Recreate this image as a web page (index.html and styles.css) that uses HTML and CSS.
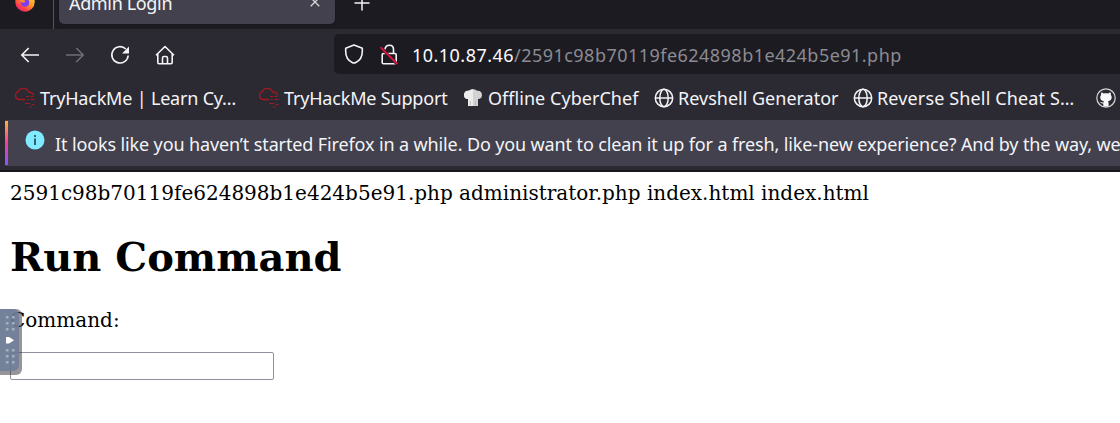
FILE: index.html
```html
<!DOCTYPE html>
<html lang="en">
<head>
<meta charset="utf-8">
<title>Admin Login</title>
<link rel="stylesheet" href="styles.css">
</head>
<body>
<svg class="defs" width="0" height="0" aria-hidden="true">
  <defs>
    <symbol id="cloud" viewBox="0 0 22 22">
      <g fill="none" stroke="#a51820" stroke-width="1.3">
        <path d="M11 12.5H5a4 4 0 0 1-.6-7.8C5 2.400 7 1.300 9.300 1.300c2.700 0 4.700 1.500 5.300 3.900 2.400-.2 4.400 1 4.900 3.200" />
        <path d="M12 9.500h3m1.500 0h3M9 12.500h1m3 0h1.500m2 0h4M11 16.500h5m1.500 1h3M15 20h2.500" stroke-width="1.1"/>
      </g>
    </symbol>
    <symbol id="globe" viewBox="0 0 20 20">
      <g fill="none" stroke="#f4f4f6" stroke-width="1.5">
        <circle cx="10" cy="10" r="8.700"/><ellipse cx="10" cy="10" rx="4.200" ry="8.700"/><path d="M1.500 10h17"/>
      </g>
    </symbol>
  </defs>
</svg>
<div class="browser">
  <div class="tabs">
    <svg class="firefox" viewBox="0 0 20 20" width="20" height="20">
      <defs><linearGradient id="fire" x1=".9" y1="0" x2=".2" y2="1"><stop offset="0" stop-color="#ffe83c"/><stop offset=".5" stop-color="#ff9428"/><stop offset=".8" stop-color="#ff3a4c"/><stop offset="1" stop-color="#e8188c"/></linearGradient></defs>
      <circle cx="10" cy="10" r="9.700" fill="url(#fire)"/><circle cx="10" cy="10.500" r="4.300" fill="#7b3ff0"/><path d="M5 8c2-1 4 0 5.500 1-1 2-3 2-4.500 1" fill="#ff8a28"/>
    </svg>
    <div class="tab"><span class="tab-title">Admin Login</span>
      <svg class="close" viewBox="0 0 10 10" width="10" height="10"><path d="M.7.7l8.600 8.600M9.300.7L.7 9.300" stroke="#d8d8dd" stroke-width="1.300"/></svg>
    </div>
    <svg class="plus" viewBox="0 0 16 16" width="16" height="16"><path d="M8 .5v15M.5 8h15" stroke="#f4f4f6" stroke-width="1.500"/></svg>
  </div>
  <div class="nav">
    <div class="buttons">
      <svg viewBox="0 0 20 20" width="20" height="20"><path d="M19 10H2M8.700 3L1.800 10l6.900 7" fill="none" stroke="#f4f4f6" stroke-width="1.600"/></svg>
      <svg viewBox="0 0 20 20" width="20" height="20"><path d="M1 10h17M11.300 3l6.900 7-6.900 7" fill="none" stroke="#6e6d75" stroke-width="1.600"/></svg>
      <svg viewBox="0 0 20 20" width="20" height="20"><path d="M15.800 4A8.200 8.200 0 1 0 18.200 10.500" fill="none" stroke="#f4f4f6" stroke-width="1.600"/><path d="M19 1.500v7h-7z" fill="#f4f4f6"/></svg>
      <svg viewBox="0 0 20 20" width="20" height="20"><path d="M1 10.300L10 1.500l9 8.800M2.800 9v8.500q0 1.200 1.200 1.200h12q1.200 0 1.200-1.200V9M7.500 18.500V13q0-1.500 1.500-1.500h2q1.500 0 1.500 1.500v5.500" fill="none" stroke="#f4f4f6" stroke-width="1.600" stroke-linejoin="round"/></svg>
    </div>
    <div class="address">
      <svg viewBox="0 0 20 20" width="20" height="20"><path d="M10 1l8.300 3.300v3.200c0 5-2.800 9.200-6.500 11q-1.800.9-3.600 0C4.500 16.700 1.700 12.500 1.700 7.500V4.300z" fill="none" stroke="#f4f4f6" stroke-width="1.600" stroke-linejoin="round"/></svg>
      <svg class="lock" viewBox="0 0 18 21" width="18" height="21"><rect x="2.200" y="9.500" width="14" height="10.200" rx="1.300" fill="none" stroke="#f4f4f6" stroke-width="1.600"/><path d="M5 5.500C5.500-.2 13.500-.2 13.500 5.500v4" fill="none" stroke="#f4f4f6" stroke-width="1.600"/><path d="M.5 3.200L17 20" stroke="#1c1b22" stroke-width="3"/><path d="M.5 3.200L17.300 20" stroke="#e31243" stroke-width="1.800"/></svg>
      <span class="url"><span class="host">10.10.87.46</span>/2591c98b70119fe624898b1e424b5e91.php</span>
    </div>
  </div>
  <div class="bookmarks">
    <div class="bookmark b1"><svg width="22" height="22"><use href="#cloud"/></svg><span>TryHackMe | Learn Cy…</span></div>
    <div class="bookmark b2"><svg width="22" height="22"><use href="#cloud"/></svg><span>TryHackMe Support</span></div>
    <div class="bookmark b3"><svg viewBox="0 0 20 20" width="20" height="20"><path d="M5 18V11C2 11 .8 9 1 6.500 1.300 3.500 3.500 2.200 6 2.800 8 .8 12 .8 14 2.800c2.500-.6 4.700.7 5 3.700.2 2.500-1 4.500-4 4.500v7z" fill="#d2d2d2"/><path d="M5 18V11C2 11 .8 9 1 6.500 1.300 3.500 3.500 2.200 6 2.800q1.700-1.500 4-1.500V18z" fill="#ececec"/><path d="M7.300 13v4M12.500 13v4" stroke="#bcbcbc"/></svg><span>Offline CyberChef</span></div>
    <div class="bookmark b4"><svg width="20" height="20"><use href="#globe"/></svg><span>Revshell Generator</span></div>
    <div class="bookmark b5"><svg width="20" height="20"><use href="#globe"/></svg><span>Reverse Shell Cheat S…</span></div>
    <div class="bookmark b6"><svg viewBox="0 0 20 20" width="20" height="20"><circle cx="10" cy="10" r="9.200" fill="none" stroke="#d5d5d8" stroke-width="1.200"/><path d="M7.300 18.500v-3c-2 .4-2.700-.8-3.300-1.700 1.500-.2 1.800 1.200 3.400.7.100-.6.300-1 .6-1.200-2.500-.4-3.800-1.500-3.800-4 0-1 .3-1.800.9-2.400-.2-.8-.1-1.700.2-2.400 1 0 1.800.5 2.500 1 1.300-.4 3-.4 4.300 0 .8-.5 1.600-1 2.500-1 .3.800.4 1.600.2 2.400.6.600.9 1.400.9 2.400 0 2.500-1.300 3.600-3.800 4 .5.500.7 1.100.7 2v3.200z" fill="#f8f8fa"/></svg></div>
  </div>
  <div class="notice">
    <svg viewBox="0 0 20 20" width="20" height="20"><circle cx="10" cy="10" r="9.500" fill="#80ebff"/><path d="M10 5v2M10 8.500V15" stroke="#35566a" stroke-width="1.900"/></svg>
    <span class="notice-text">It looks like you haven’t started Firefox in a while. Do you want to clean it up for a fresh, like-new experience? And by the way, we</span>
  </div>
</div>
<main class="page">
  <div class="output">2591c98b70119fe624898b1e424b5e91.php administrator.php index.html index.html</div>
  <h1 class="heading">Run Command</h1>
  <label class="label" for="command">Command:</label>
  <input class="command" id="command" type="text">
</main>
<div class="drawer">
  <svg viewBox="0 0 19 62" width="19" height="62"><g stroke="#a5b1c0" stroke-width="2.600" stroke-dasharray="2.600 3.400"><path d="M7.200 7v16M13.200 7v16M7.200 40v15M13.200 40v15"/></g><path d="M6 28v6.500h3l5-3.200-5-3.300z" fill="#fff"/></svg>
</div>
</body>
</html>
```
FILE: styles.css
```css
* { box-sizing: border-box; }
body { margin: 0; width: 1120px; height: 423px; overflow: hidden; background: #fff; color: #000; }
.defs { position: absolute; }
svg { display: block; flex: none; }
.browser { height: 172px; background: #2b2a33; border-bottom: 2px solid #18171d; color: #f4f4f8; font-family: "Noto Sans", sans-serif; font-size: 18px; white-space: nowrap; overflow: hidden; }
.tabs { height: 29px; background: #1c1b22; display: flex; align-items: flex-start; }
.firefox { margin: -8px 0 0 15px; }
.tab { width: 276px; height: 24px; margin-left: 24px; padding: 0 15px 0 10px; display: flex; justify-content: space-between; background: #42414d; border-radius: 0 0 5px 5px; box-shadow: 0 0 2px #15141a; }
.tabs .tab { position: relative; }
.tab::before { content: ""; position: absolute; left: -6px; top: 0; width: 1px; height: 29px; background: #55545e; }
.tab-title { line-height: 24px; margin-top: -9px; letter-spacing: -.35px; }
.close { margin-top: -3px; }
.plus { margin: -5px 0 0 19px; }
.nav { height: 50px; display: flex; padding-top: 5px; }
.buttons { width: 334px; padding: 11px 0 0 20px; display: flex; gap: 25px; }
.address { height: 40px; flex: 1; display: flex; align-items: center; padding-left: 10px; background: #1c1b22; border-radius: 5px 0 0 5px; }
.lock { margin-left: 16px; }
.url { margin-left: 14px; color: #8c8b92; line-height: 40px; padding-top: 2px; letter-spacing: .47px; }
.host { color: #fbfbfe; }
.bookmarks { height: 41px; display: flex; align-items: center; padding: 0 0 4px 14px; }
.bookmark { display: flex; align-items: center; gap: 4px; flex: none; }
.bookmark span { line-height: 24px; }
.b1 { width: 244px; letter-spacing: -.19px; }
.b2 { width: 205px; letter-spacing: -.18px; }
.b3 { width: 191px; gap: 5px; letter-spacing: .04px; }
.b4 { width: 199px; }
.b5 { width: 243px; letter-spacing: .14px; }
.notice { height: 46px; margin-left: 5px; display: flex; align-items: center; background: #42414d; border-top: 1px solid #393842; border-bottom: 1px solid #393842; border-left: 3px solid; border-image: linear-gradient(#ffb13d, #f43d9b 50%, #8954ff) 0 0 0 3; padding-left: 17px; }
.notice svg { margin-top: -7px; }
.notice-text { margin-left: 10px; padding-top: 1px; letter-spacing: -.125px; }
.page { padding: 8px 10px; font-family: "DejaVu Serif", serif; font-size: 20px; display: flex; flex-direction: column; align-items: flex-start; white-space: nowrap; }
.output { line-height: 26px; }
.heading { margin: 26px 0; font-size: 40px; line-height: 50px; }
.label { line-height: 26px; margin-top: -1px; }
.command { width: 264px; height: 28px; margin: 19px 0 0; border: 1px solid #8f8f9d; border-radius: 2px; background: #fff; outline: 0; }
.drawer { position: absolute; left: 0; top: 309px; width: 22px; height: 66px; background: rgba(65, 62, 65, .55); border-radius: 0 6px 6px 0; }
.drawer svg { background: rgba(108, 127, 154, .85); border-radius: 0 6px 6px 0; }
```
